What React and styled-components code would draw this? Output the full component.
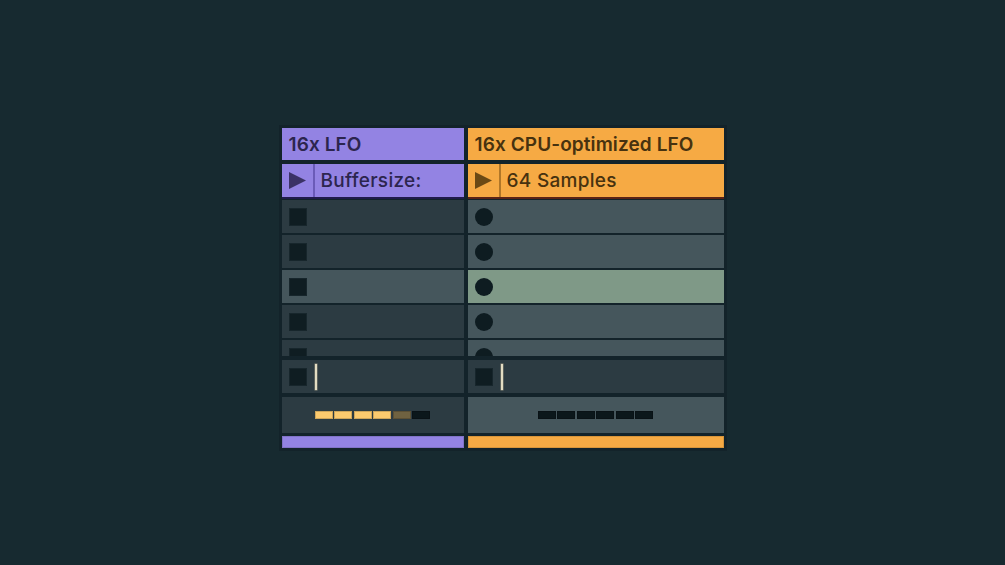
import React from 'react';
import styled, { createGlobalStyle } from 'styled-components';

const GlobalStyle = createGlobalStyle`
	html, body {
		margin: 0;
		padding: 0;
		background: #172a30;
	}
	body {
		font-family: Inter, 'Noto Sans', sans-serif;
	}
`;

const themes = {
	purple: {
		accent: '#9383e3',
		ink: '#2c254e',
		icon: '#3b3266',
		divider: '#6a5bb8',
		edge: '#211c4c',
		row: '#2c3b42',
		activeRow: '#45565c',
		meter: '#2c3b42',
	},
	orange: {
		accent: '#f6aa44',
		ink: '#47320f',
		icon: '#6b4914',
		divider: '#b07628',
		edge: '#5b2416',
		row: '#45565c',
		activeRow: '#7f9987',
		meter: '#45565c',
	},
};

const Stage = styled.div`
	display: flex;
	justify-content: center;
	align-items: flex-start;
	height: 565px;
	padding-top: 125px;
	box-sizing: border-box;
`;

const Frame = styled.div`
	display: flex;
	gap: 4px;
	padding: 3px;
	background: #13232a;
`;

const Column = styled.div`
	display: flex;
	flex-direction: column;
	width: ${(p) => p.$width}px;
`;

const Header = styled.div`
	height: 32px;
	display: flex;
	align-items: center;
	padding-left: 7px;
	background: ${(p) => p.$t.accent};
	color: ${(p) => p.$t.ink};
	font-size: 19px;
	font-weight: 600;
	letter-spacing: 0.1px;
`;

const ControlRow = styled.div`
	margin-top: 4px;
	height: 35px;
	box-sizing: border-box;
	display: flex;
	background: ${(p) => p.$t.accent};
	border-bottom: 2px solid ${(p) => p.$t.edge};
	color: ${(p) => p.$t.ink};
	font-size: 19px;
	font-weight: 500;
	letter-spacing: 0.3px;
`;

const PlayCell = styled.div`
	width: 33px;
	display: flex;
	align-items: center;
	padding-left: 7px;
	border-right: 2px solid ${(p) => p.$t.divider};
	box-sizing: border-box;
`;

const ControlLabel = styled.div`
	display: flex;
	align-items: center;
	padding-left: 6px;
`;

const List = styled.div`
	margin-top: 1px;
	height: 156px;
	overflow: hidden;
	display: flex;
	flex-direction: column;
	gap: 2px;
`;

const Slot = styled.div`
	flex: 0 0 33px;
	display: flex;
	align-items: center;
	padding-left: 7px;
	background: ${(p) => (p.$active ? p.$t.activeRow : p.$t.row)};
`;

const Square = styled.div`
	width: 18px;
	height: 18px;
	background: #0f1d22;
	box-shadow: inset 0 0 0 1px #17262c;
`;

const Dot = styled.div`
	width: 18px;
	height: 18px;
	border-radius: 50%;
	background: #0e1c21;
`;

const InputRow = styled.div`
	margin-top: 4px;
	height: 33px;
	display: flex;
	align-items: center;
	padding-left: 7px;
	gap: 8px;
	background: #2c3b42;
`;

const Caret = styled.div`
	width: 2px;
	height: 26px;
	background: #e2dcc2;
	box-shadow: 0 0 0 0.5px #8c8a78;
`;

const MeterRow = styled.div`
	margin-top: 4px;
	height: 36px;
	display: flex;
	align-items: center;
	justify-content: center;
	gap: 1.6px;
	background: ${(p) => p.$t.meter};
`;

const Segment = styled.div`
	width: 18px;
	height: 8px;
	background: ${(p) => p.$color};
	box-shadow: inset 0 0 0 1px rgba(0, 0, 0, 0.18);
`;

const Bar = styled.div`
	margin-top: 3px;
	height: 12px;
	background: ${(p) => p.$t.accent};
	box-shadow: inset 0 0 0 1px rgba(0, 0, 0, 0.12);
`;

const Play = ({ color }) => (
	<svg width="17" height="17" viewBox="0 0 17 17">
		<polygon points="0,0 17,8.5 0,17" fill={color} />
	</svg>
);

const segColors = {
	on: '#fcca6e',
	dim: '#6f6241',
	off: '#0b171b',
};

const LfoColumn = ({ t, width, title, label, Marker, levels }) => (
	<Column $width={width}>
		<Header $t={t}>{title}</Header>
		<ControlRow $t={t}>
			<PlayCell $t={t}>
				<Play color={t.icon} />
			</PlayCell>
			<ControlLabel>{label}</ControlLabel>
		</ControlRow>
		<List>
			{[0, 1, 2, 3, 4].map((i) => (
				<Slot key={i} $t={t} $active={i === 2}>
					<Marker />
				</Slot>
			))}
		</List>
		<InputRow>
			<Square />
			<Caret />
		</InputRow>
		<MeterRow $t={t}>
			{levels.map((l, i) => (
				<Segment key={i} $color={segColors[l]} />
			))}
		</MeterRow>
		<Bar $t={t} />
	</Column>
);

const App = () => {
	return (
		<Stage>
			<GlobalStyle />
			<Frame>
				<LfoColumn
					t={themes.purple}
					width={182}
					title="16x LFO"
					label="Buffersize:"
					Marker={Square}
					levels={['on', 'on', 'on', 'on', 'dim', 'off']}
				/>
				<LfoColumn
					t={themes.orange}
					width={256}
					title="16x CPU-optimized LFO"
					label="64 Samples"
					Marker={Dot}
					levels={['off', 'off', 'off', 'off', 'off', 'off']}
				/>
			</Frame>
		</Stage>
	);
};

export default App;
